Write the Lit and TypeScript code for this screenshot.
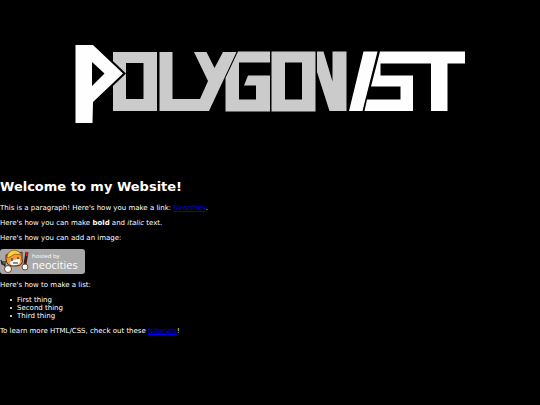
import { LitElement, html, css } from "lit";
import { customElement } from "lit/decorators.js";

@customElement("site-logo")
class SiteLogo extends LitElement {
  static styles = css`
    :host { display: block; }
    svg { display: block; width: 100%; }
  `;
  render() {
    return html`
      <svg viewBox="0 0 540 169" role="img" aria-label="Polygonist">
        <g fill="#cbcbcb" fill-rule="evenodd">
          <path d="M113 52H157V111H113ZM126 63V99H143.500V63Z" />
          <path d="M159.500 52H172.500V99H200L208 81L194 52H206.500L214.500 68L223 52H236.500L209 111H159.500Z" />
          <path d="M238 51.500H270V62.500H239V99.500H256V85.500H244L248 75.500H270V111.500H225.500V78Z" />
          <path d="M271.500 51.500H315.500V111.500H271.500ZM285 62.500V99.500H302V62.500Z" />
          <path d="M317 51.500H323.500L332.500 81.500V51.500H346.500V111H329.500L317 72Z" />
        </g>
        <path d="M93 42L126 73.500L93 105Z" fill="#000" />
        <g fill="#fefefe" fill-rule="evenodd">
          <path d="M75.500 45H93L123 73.500L93 102L92.500 123H75.500ZM92 62V86L104.500 73.500Z" />
          <path d="M363.500 51.500H377.500L362.500 111H349Z" />
          <path d="M380 51.500H465V63.500H447.500V111H431V63.500H380.500V75.500H413V111H364.500L367 99.500H400.500V86.500H371Z" />
        </g>
      </svg>
    `;
  }
}

@customElement("hosted-badge")
class HostedBadge extends LitElement {
  static styles = css`
    :host { display: block; width: 85px; }
    svg { display: block; width: 100%; }
    text { font-family: "Open Sans", "Noto Sans", sans-serif; fill: #fff; }
    .small { font-size: 6px; }
    .large { font-size: 11px; }
  `;
  render() {
    return html`
      <svg viewBox="0 0 85 26" role="img" aria-label="Hosted by Neocities">
        <rect width="85" height="25" rx="3" fill="#a9a9a9" />
        <path d="M1 11L2 15L5 16L5 12M3 12V15M4 16L8 21" stroke="#222" stroke-width="1.200" fill="none" />
        <path d="M27 3L25 15" stroke="#3b1b1b" stroke-width="3" />
        <path d="M27 3L26.500 7" stroke="#d22" stroke-width="1.800" />
        <path d="M6 6L8 5Q13 0 20 4L22 3L22 9Q24 17 16 17Q6 18 6 10Z" fill="#f29a3c" stroke="#4a2a10" />
        <path d="M7 8Q8 1 15 1Q20 2 21 6L15 5L8 9Z" fill="#f7cf45" stroke="#8a5a10" stroke-width=".800" />
        <path d="M10 13Q14 10 20 10Q21 16 15 16Q10 17 10 13Z" fill="#fff" />
        <path d="M12 9V12M18 8V10M13 14H18" stroke="#222" />
        <circle cx="8" cy="20" r="3.500" fill="#fff" stroke="#643" />
        <circle cx="25" cy="18" r="3" fill="#fff" stroke="#643" />
        <text class="small" x="32" y="9">hosted by</text>
        <text class="large" x="32" y="20">neocities</text>
      </svg>
    `;
  }
}

@customElement("app-root")
class AppRoot extends LitElement {
  static styles = css`
    :host {
      display: block;
      min-height: 100vh;
      background: #000;
      color: #fff;
      font: 7px/8px Verdana, "DejaVu Sans", sans-serif;
    }
    h1 { margin: 9px 0; font-size: 13px; line-height: 17px; }
    p { margin: 0 0 7px; }
    a { color: #0000ee; }
    ul { margin: 0 0 7px; padding-left: 10px; list-style: none; }
    li { display: flex; align-items: center; gap: 5px; }
    li::before { content: ""; width: 2px; height: 2px; border-radius: 1px; background: #fff; }
    hosted-badge { margin-bottom: 6px; }
  `;
  render() {
    return html`
      <site-logo></site-logo>
      <main>
        <h1>Welcome to my Website!</h1>
        <p>This is a paragraph! Here's how you make a link: <a href="#neocities">Neocities</a>.</p>
        <p>Here's how you can make <strong>bold</strong> and <em>italic</em> text.</p>
        <p>Here's how you can add an image:</p>
        <hosted-badge></hosted-badge>
        <p>Here's how to make a list:</p>
        <ul>
          <li>First thing</li>
          <li>Second thing</li>
          <li>Third thing</li>
        </ul>
        <p>To learn more HTML/CSS, check out these <a href="#tutorials">tutorials</a>!</p>
      </main>
    `;
  }
}
